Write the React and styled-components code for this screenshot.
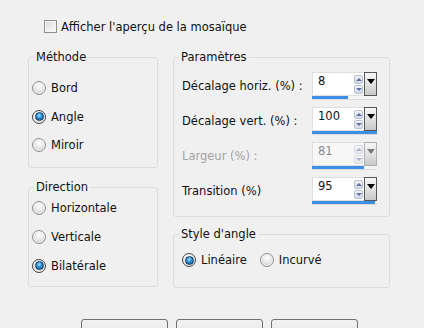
import React from "react"
import styled, { createGlobalStyle } from "styled-components"

const GlobalStyle = createGlobalStyle`
  body {
    margin: 0;
    background: #f0f0f0;
    font-family: "DejaVu Sans", sans-serif;
    font-size: 11.5px;
    color: #111;
  }
`

const Dialog = styled.div`
  width: 424px;
  height: 328px;
  overflow: hidden;
  box-sizing: border-box;
  padding-top: 20px;
  display: flex;
  flex-direction: column;
`

const PreviewRow = styled.label`
  display: flex;
  align-items: center;
  gap: 4px;
  height: 13px;
  margin-left: 44px;
`

const CheckBox = styled.span`
  width: 13px;
  height: 13px;
  box-sizing: border-box;
  border: 1px solid #8f8f8f;
  background: linear-gradient(135deg, #d8d8d8 0%, #f0f0f0 60%, #fdfdfd 100%);
  box-shadow: inset 0 0 0 1px #f6f6f6;
`

const Columns = styled.div`
  display: flex;
  gap: 15px;
  margin: 17px 0 0 28px;
`

const Column = styled.div`
  display: flex;
  flex-direction: column;
  gap: ${p => p.$gap}px;
  width: ${p => p.$width}px;
`

const Group = styled.fieldset`
  margin: 0;
  padding: 0;
  min-width: 0;
  box-sizing: border-box;
  height: ${p => p.$height}px;
  border: 1px solid #d9dde0;
  border-radius: 3px;
`

const Legend = styled.legend`
  margin-left: 5px;
  padding: 0 2px;
  line-height: 15px;
`

const GroupBody = styled.div`
  display: flex;
  flex-direction: ${p => (p.$row ? "row" : "column")};
  gap: ${p => p.$gap || 0}px;
  padding: ${p => p.$pad};
`

const RadioItem = styled.label`
  display: flex;
  align-items: center;
  gap: 5px;
  height: ${p => p.$h}px;
`

const RadioDot = styled.span`
  width: 14px;
  height: 14px;
  box-sizing: border-box;
  border-radius: 50%;
  border: 1px solid ${p => (p.$checked ? "#444" : "#8e8f8f")};
  background: radial-gradient(circle at 50% 35%, #ffffff 0%, #ebebeb 40%, #c2c2c2 100%);
  box-shadow: inset 0 0 0 1px rgba(255, 255, 255, 0.6);
  display: flex;
  align-items: center;
  justify-content: center;

  &::after {
    content: "";
    display: ${p => (p.$checked ? "block" : "none")};
    width: 9px;
    height: 9px;
    border-radius: 50%;
    background: radial-gradient(circle at 45% 35%, #a4ddff 0%, #2b8ed6 45%, #0a4677 100%);
    border: 1px solid #123f63;
    box-sizing: border-box;
  }
`

const ParamRow = styled.div`
  display: flex;
  align-items: center;
  height: 28px;
`

const ParamLabel = styled.span`
  width: 130px;
  color: ${p => (p.$disabled ? "#a2a2a2" : "inherit")};
`

const Spin = styled.div`
  width: 65px;
  display: flex;
  flex-direction: column;
`

const SpinTop = styled.div`
  display: flex;
  height: 24px;
`

const SpinField = styled.div`
  flex: 1;
  display: flex;
  justify-content: space-between;
  box-sizing: border-box;
  padding: 1px 1px 0 5px;
  background: ${p => (p.$disabled ? "#f7f7f7" : "#fff")};
  border: 1px solid #dedede;
  border-right: none;
  color: ${p => (p.$disabled ? "#8a8a8a" : "inherit")};
  line-height: 15px;
`

const Arrows = styled.div`
  display: flex;
  flex-direction: column;
  gap: 1px;
  padding-top: 1px;
  opacity: ${p => (p.$disabled ? 0.5 : 1)};
`

const ArrowBtn = styled.span`
  width: 9px;
  height: 9px;
  box-sizing: border-box;
  border: 1px solid #b9c1cd;
  border-radius: 2px;
  background: linear-gradient(#f1f4f9, #d3dbe7);
  display: flex;
  align-items: center;
  justify-content: center;

  &::after {
    content: "";
    border-left: 3px solid transparent;
    border-right: 3px solid transparent;
    ${p => (p.$up ? "border-bottom" : "border-top")}: 3px solid #5b6fa4;
  }
`

const DropBtn = styled.span`
  width: 13px;
  box-sizing: border-box;
  border: 1px solid ${p => (p.$disabled ? "#b0b0b0" : "#575757")};
  background: linear-gradient(#f6f6f6, #e2e2e2 50%, #c8c8c8);
  display: flex;
  justify-content: center;
  padding-top: 6px;

  &::after {
    content: "";
    height: 0;
    border-left: 4px solid transparent;
    border-right: 4px solid transparent;
    border-top: 5px solid ${p => (p.$disabled ? "#7a7a7a" : "#000")};
  }
`

const Track = styled.div`
  height: 3px;
  background: #f4f4f4;
  border-bottom: 1px solid #dcdcdc;
`

const Fill = styled.div`
  height: 3px;
  background: #3d8fe6;
`

const ButtonRow = styled.div`
  display: flex;
  gap: 8px;
  margin: 31px 0 0 81px;
`

const DialogButton = styled.button`
  width: 87px;
  height: 23px;
  flex: none;
  border: 1px solid #707070;
  border-radius: 3px;
  background: linear-gradient(#f2f2f2, #ebebeb 50%, #dddddd 50%, #cfcfcf);
  font: inherit;
`

const Radio = ({ label, checked, h }) => (
  <RadioItem $h={h}>
    <RadioDot $checked={checked} />
    {label}
  </RadioItem>
)

const Spinner = ({ value, fill, disabled }) => (
  <Spin>
    <SpinTop>
      <SpinField $disabled={disabled}>
        {value}
        <Arrows $disabled={disabled}>
          <ArrowBtn $up />
          <ArrowBtn />
        </Arrows>
      </SpinField>
      <DropBtn $disabled={disabled} />
    </SpinTop>
    <Track>
      <Fill style={{ width: fill }} />
    </Track>
  </Spin>
)

const params = [
  { label: "Décalage horiz. (%) :", value: "8", fill: 36 },
  { label: "Décalage vert. (%) :", value: "100", fill: 65 },
  { label: "Largeur (%) :", value: "81", fill: 52, disabled: true },
  { label: "Transition (%)", value: "95", fill: 63 },
]

const App = () => (
  <Dialog>
    <GlobalStyle />
    <PreviewRow>
      <CheckBox />
      Afficher l'aperçu de la mosaïque
    </PreviewRow>
    <Columns>
      <Column $width={130} $gap={12}>
        <Group $height={118}>
          <Legend>Méthode</Legend>
          <GroupBody $pad="9px 0 0 3px">
            <Radio label="Bord" h={28.5} />
            <Radio label="Angle" h={28.5} checked />
            <Radio label="Miroir" h={28.5} />
          </GroupBody>
        </Group>
        <Group $height={107}>
          <Legend>Direction</Legend>
          <GroupBody $pad="0 0 0 3px" style={{ marginTop: -2 }}>
            <Radio label="Horizontale" h={29} />
            <Radio label="Verticale" h={29} />
            <Radio label="Bilatérale" h={29} checked />
          </GroupBody>
        </Group>
      </Column>
      <Column $width={217} $gap={10}>
        <Group $height={167}>
          <Legend>Paramètres</Legend>
          <GroupBody $pad="7px 0 0 8px" $gap={7}>
            {params.map(p => (
              <ParamRow key={p.label}>
                <ParamLabel $disabled={p.disabled}>{p.label}</ParamLabel>
                <Spinner value={p.value} fill={p.fill} disabled={p.disabled} />
              </ParamRow>
            ))}
          </GroupBody>
        </Group>
        <Group $height={61}>
          <Legend>Style d'angle</Legend>
          <GroupBody $row $gap={13} $pad="4px 0 0 8px">
            <Radio label="Linéaire" h={28} checked />
            <Radio label="Incurvé" h={28} />
          </GroupBody>
        </Group>
      </Column>
    </Columns>
    <ButtonRow>
      <DialogButton />
      <DialogButton />
      <DialogButton />
    </ButtonRow>
  </Dialog>
)

export default App
